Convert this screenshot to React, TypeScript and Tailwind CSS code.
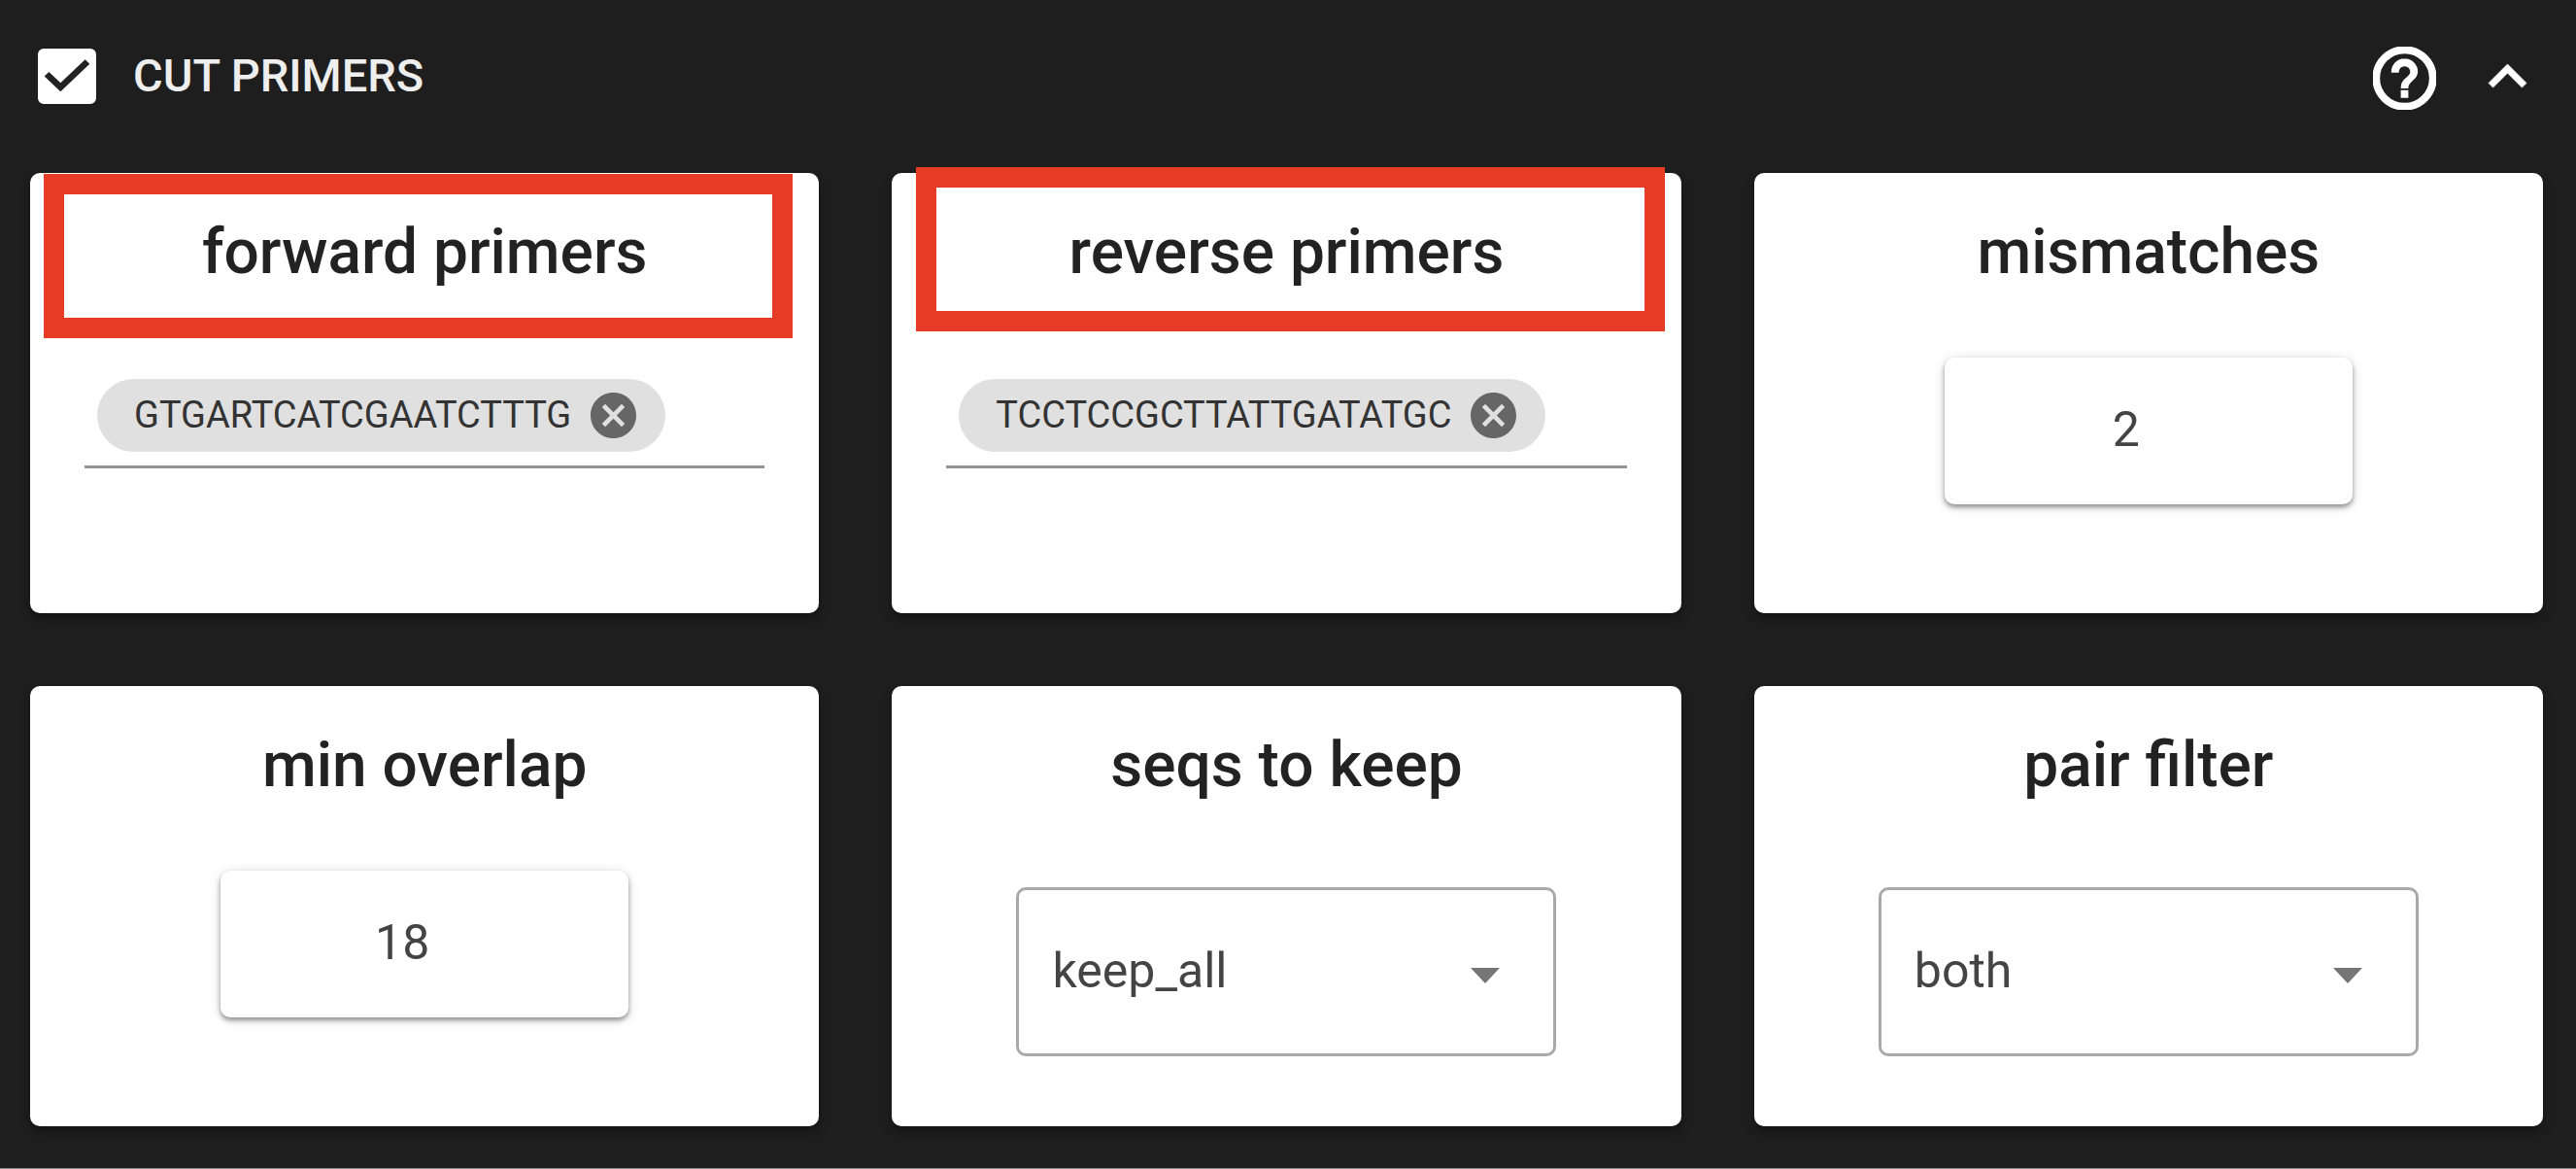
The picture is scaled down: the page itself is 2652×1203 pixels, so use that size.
import { useState, type ReactNode } from "react";

function Card({ title, htmlFor, mark, children }: { title: string; htmlFor: string; mark?: ReactNode; children: ReactNode }) {
  return (
    <section className="relative flex min-h-[453px] flex-col items-center rounded-[10px] bg-white shadow-[0_6px_10px_rgba(0,0,0,0.35)]">
      <label htmlFor={htmlFor} className="pt-[42px] text-[64px] leading-[80px] font-medium text-[#222]">
        {title}
      </label>
      {children}
      {mark}
    </section>
  );
}

function PrimerField({ id, initial }: { id: string; initial: string }) {
  const [primer, setPrimer] = useState<string | null>(initial);
  return (
    <div className="mt-[90px] flex w-full px-14">
      <div className="flex h-[92px] w-full items-start border-b-3 border-[#949494] pl-[13px]">
        {primer && (
          <span className="flex h-[75px] shrink-0 items-center gap-5 rounded-full bg-[#e0e0e0] pr-[30px] pl-[38px] text-[38px] text-[#333]">
            {primer}
            <button type="button" aria-label={`Remove ${primer}`} onClick={() => setPrimer(null)}>
              <svg viewBox="2 2 20 20" className="size-[47px] fill-[#666]" aria-hidden="true">
                <path d="M12 2C6.47 2 2 6.47 2 12s4.47 10 10 10 10-4.47 10-10S17.53 2 12 2zm5 13.59L15.59 17 12 13.41 8.41 17 7 15.59 10.59 12 7 8.41 8.41 7 12 10.59 15.59 7 17 8.41 13.41 12 17 15.59z" />
              </svg>
            </button>
          </span>
        )}
        <input id={id} type="text" className="h-[75px] w-0 min-w-0 flex-1 bg-transparent text-[38px] outline-none" />
      </div>
    </div>
  );
}

function NumberField({ id, initial }: { id: string; initial: number }) {
  return (
    <input
      id={id}
      type="number"
      defaultValue={initial}
      className="mt-[68px] h-[151px] w-[420px] max-w-full appearance-none rounded-[10px] bg-white pr-[46px] pb-1 text-center text-[50px] text-[#444] shadow-[0_3px_5px_rgba(0,0,0,0.4),0_2px_14px_rgba(0,0,0,0.12)] outline-none [-moz-appearance:textfield] [&::-webkit-inner-spin-button]:appearance-none"
    />
  );
}

function SelectField({ id, options }: { id: string; options: string[] }) {
  return (
    <div className="relative mt-[85px] w-[556px] max-w-full">
      <select id={id} className="h-[174px] w-full appearance-none rounded-[10px] border-3 border-[#a9a9a9] bg-white pr-24 pb-0.5 pl-[34px] text-[50px] text-[#444] outline-none">
        {options.map((o) => (
          <option key={o}>{o}</option>
        ))}
      </select>
      <svg viewBox="0 0 30 16" className="pointer-events-none absolute top-[83px] right-[58px] h-4 w-[30px] fill-[#757575]" aria-hidden="true">
        <path d="M0 0h30L15 16z" />
      </svg>
    </div>
  );
}

export default function App() {
  const [open, setOpen] = useState(true);
  return (
    <main className="min-h-screen border-b border-[#8a8a8a] bg-[#1e1e1e] pr-[34px] pb-[43px] pl-[31px] font-['Roboto',sans-serif]">
      <header className="flex h-[178px] items-start justify-between pr-[17px] pl-2">
        <label className="flex items-center gap-[38px] pt-[46px] text-[47px] leading-[64px] font-medium text-[#eee]">
          <span className="relative block h-[57px] w-[60px]">
            <input type="checkbox" defaultChecked className="peer absolute inset-0 size-full appearance-none rounded-[6px] border-6 border-white checked:bg-white" />
            <svg viewBox="3 3 18 18" preserveAspectRatio="none" className="pointer-events-none relative hidden size-full fill-[#222] peer-checked:block" aria-hidden="true">
              <path d="M10 17L5 12L6.41 10.58L10 14.17L17.59 6.58L19 8z" />
            </svg>
          </span>
          CUT PRIMERS
        </label>
        <div className="flex items-start gap-[54px] pt-[48px]">
          <button type="button" aria-label="Help">
            <svg viewBox="2 2 20 20" className="size-[65px] fill-white" aria-hidden="true">
              <path d="M11 18h2v-2h-2v2zm1-16C6.48 2 2 6.48 2 12s4.48 10 10 10 10-4.48 10-10S17.52 2 12 2zm0 18c-4.41 0-8-3.59-8-8s3.59-8 8-8 8 3.59 8 8-3.59 8-8 8zm0-14c-2.21 0-4 1.79-4 4h2c0-1.1.9-2 2-2s2 .9 2 2c0 2-3 1.75-3 5h2c0-2.25 3-2.5 3-5 0-2.21-1.79-4-4-4z" stroke="white" strokeWidth="0.4" />
            </svg>
          </button>
          <button type="button" aria-label="Toggle section" aria-expanded={open} onClick={() => setOpen(!open)} className="pt-[18px]">
            <svg viewBox="6 8 12 8" className="h-[26px] w-[39px] overflow-visible fill-white" aria-hidden="true">
              <path d="M12 8l-6 6 1.41 1.41L12 10.83l4.59 4.58L18 14z" stroke="white" strokeWidth="0.2" />
            </svg>
          </button>
        </div>
      </header>
      {open && (
        <div className="grid grid-cols-3 gap-[75px]">
          <Card title="forward primers" htmlFor="forward" mark={<div className="pointer-events-none absolute top-px right-[27px] left-[14px] h-[169px] border-21 border-[#e63b25]" />}>
            <PrimerField id="forward" initial="GTGARTCATCGAATCTTTG" />
          </Card>
          <Card title="reverse primers" htmlFor="reverse" mark={<div className="pointer-events-none absolute -top-1.5 right-[17px] left-[25px] h-[169px] border-21 border-[#e63b25]" />}>
            <PrimerField id="reverse" initial="TCCTCCGCTTATTGATATGC" />
          </Card>
          <Card title="mismatches" htmlFor="mismatches">
            <NumberField id="mismatches" initial={2} />
          </Card>
          <Card title="min overlap" htmlFor="overlap">
            <NumberField id="overlap" initial={18} />
          </Card>
          <Card title="seqs to keep" htmlFor="keep">
            <SelectField id="keep" options={["keep_all", "keep_only_linked"]} />
          </Card>
          <Card title="pair filter" htmlFor="pair">
            <SelectField id="pair" options={["both", "any"]} />
          </Card>
        </div>
      )}
    </main>
  );
}
